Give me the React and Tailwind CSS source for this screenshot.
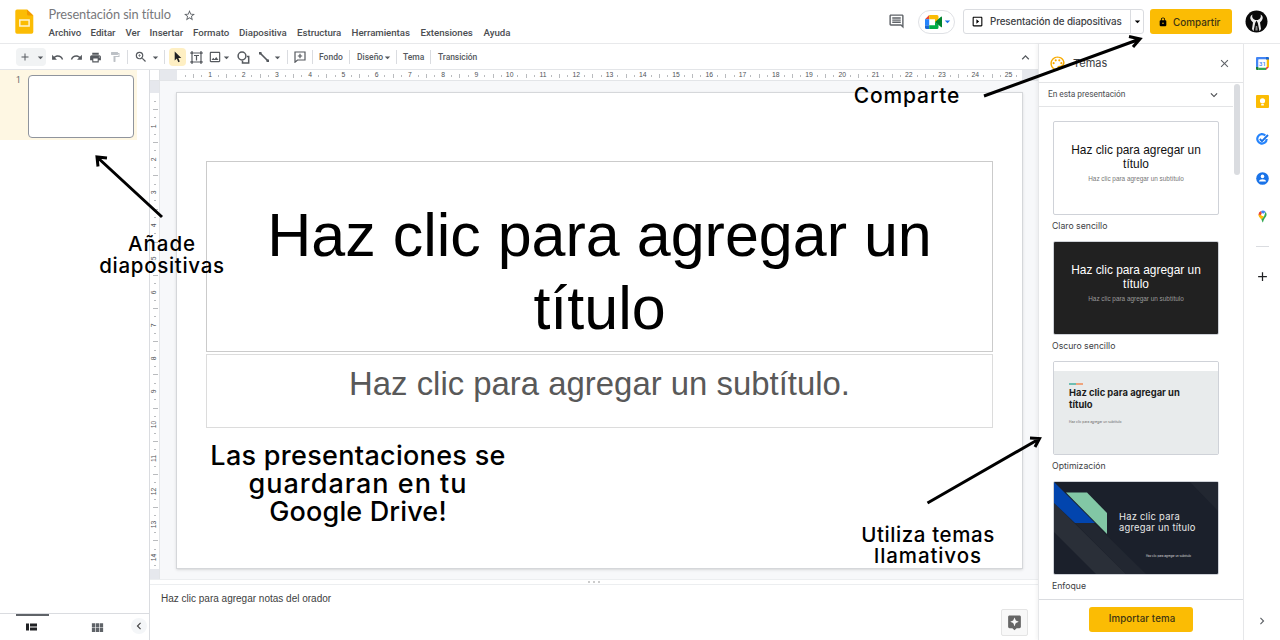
import React from 'react';
import {
  MdAdd, MdArrowDropDown, MdUndo, MdRedo, MdPrint, MdFormatPaint, MdZoomIn, MdOutlineImage,
  MdOutlineInsertComment, MdOutlineSlideshow, MdLock, MdOutlinePalette, MdClose, MdExpandMore,
  MdExpandLess, MdStarBorder, MdAssistant, MdChevronLeft, MdChevronRight, MdViewModule,
} from 'react-icons/md';

const menu = [
  ['Archivo', 'w-[42px]'], ['Editar', 'w-[35px]'], ['Ver', 'w-[24px]'], ['Insertar', 'w-[43.5px]'],
  ['Formato', 'w-[46px]'], ['Diapositiva', 'w-[58px]'], ['Estructura', 'w-[54.5px]'],
  ['Herramientas', 'w-[69px]'], ['Extensiones', 'w-[63px]'], ['Ayuda', 'w-[30px]'],
];

function Slot({ w, children }) {
  return <div className={'flex h-full shrink-0 items-center justify-center ' + w}>{children}</div>;
}

function Sep({ w }) {
  return <Slot w={w}><div className="h-[14px] w-px bg-[#dadce0]" /></Slot>;
}

function Caret({ w }) {
  return <Slot w={w}><MdArrowDropDown size={13} className="shrink-0" /></Slot>;
}

function Header() {
  return (
    <header className="flex h-[44px] shrink-0 border-b border-[#e8e9eb] bg-white">
      <svg className="ml-[15px] mt-[9px] h-[25px] w-[19px] shrink-0" viewBox="0 0 19 25">
        <path d="M2 0.5h10l6.3 6V23a1.8 1.8 0 0 1-1.8 1.8H2A1.8 1.8 0 0 1 .3 23V2.3A1.8 1.8 0 0 1 2 .5Z" fill="#fbbc04" />
        <path d="M12 .5l6.3 6H13.500a1.5 1.5 0 0 1-1.500-1.500Z" fill="#f29900" />
        <path d="M4.800 10.900h9.300v6.200H4.800Z" fill="none" stroke="#fff3cf" strokeWidth="1.500" />
      </svg>
      <div className="ml-[14.600px] flex w-[600px] flex-col">
        <div className="flex h-[26px] items-center pt-[4px]">
          <span className="w-[134px] whitespace-nowrap text-[12.800px] tracking-[-0.1px] text-[#77787b] font-['Lato',sans-serif]">Presentación sin título</span>
          <MdStarBorder size={13} className="text-[#5f6368]" />
        </div>
        <nav className="flex h-[14px] items-center text-[9.700px] font-medium tracking-[-0.05px] text-[#4b4d51] font-['Roboto',sans-serif]">
          {menu.map(([t, w]) => <span key={t} className={'whitespace-nowrap ' + w}>{t}</span>)}
        </nav>
      </div>
      <div className="ml-auto flex h-[43px] items-center pr-[12px]">
        <MdOutlineInsertComment size={17} className="mr-[13px] text-[#5f6368]" />
        <div className="mr-[8px] flex h-[24px] w-[37px] items-center rounded-full border border-[#dfe1e5] pl-[6px]">
          <svg className="shrink-0" width="18" height="14" viewBox="0 0 18 14">
            <path d="M0 4.200 4.200 0v4.200Z" fill="#ea4335" />
            <path d="M4.200 0H12q1.500 0 1.500 1.500V5L10 7.500V4.200H4.200Z" fill="#fbbc04" />
            <path d="M0 4.200h4.200v6H0Z" fill="#2684fc" />
            <path d="M0 10.200h4.200V14H1.500Q0 14 0 12.500Z" fill="#1668d6" />
            <path d="M4.200 10.200H10V7l3.500 2.500v3q0 1.500-1.500 1.500H4.200Z" fill="#00ac47" />
            <path d="M10 7 16 1.800q1-.6 1 .4v9.500q0 1-1 .4Z" fill="#00832d" />
          </svg>
          <MdArrowDropDown size={13} className="-ml-[2px] shrink-0 text-[#1a73e8]" />
        </div>
        <div className="mr-[6px] flex h-[25px] w-[181px] items-center rounded-[3px] border border-[#dadce0] text-[#3c4043]">
          <MdOutlineSlideshow size={13} className="ml-[7px] mr-[6px] shrink-0 text-black" />
          <span className="w-[140px] shrink-0 whitespace-nowrap pt-px text-[9.800px] font-medium tracking-[-0.1px] font-['Inter',sans-serif]">Presentación de diapositivas</span>
          <div className="flex h-full flex-1 items-center justify-center border-l border-[#dadce0]"><MdArrowDropDown size={13} className="shrink-0 text-black" /></div>
        </div>
        <div className="mr-[13px] flex h-[25px] w-[82px] items-center rounded-[3px] bg-[#fbbc04] pl-[8px] text-[#3d3413]">
          <MdLock size={10} className="mr-[5px] text-black" />
          <span className="pt-px text-[9.900px] font-medium font-['Inter',sans-serif]">Compartir</span>
        </div>
        <svg width="23" height="23" viewBox="0 0 23 23">
          <circle cx="11.500" cy="11.500" r="11" fill="#090909" />
          <path d="M7.500 4.500c-2.300 1.200-3 3.500-1.300 6L8 12.500 7 19l1.500 2.200L10.200 13l1.300-2.500 1.300 2.500 1.700 8.200L16 19l-1-6.500 1.800-2c1.700-2.500 1-4.800-1.300-6 1 2-.3 3.500-1 4.500l-1.700 1h-2.600L8.500 9c-.7-1-2-2.500-1-4.500Z" fill="#ececec" />
          <path d="M10.800 16h1.400l.5 4.500h-2.400Z" fill="#888" />
        </svg>
      </div>
    </header>
  );
}

function Toolbar() {
  return (
    <div className="flex h-[25px] w-[1037px] shrink-0 items-center bg-white pl-[16px] pt-px text-[#55595e] font-['Roboto',sans-serif]">
      <div className="flex h-[18px] w-[30px] shrink-0 rounded-sm bg-[#f1f3f4]">
        <Slot w="w-[18px]"><MdAdd size={12} /></Slot>
        <Caret w="w-[12px]" />
      </div>
      <Slot w="w-[22px]"><MdUndo size={13} /></Slot>
      <Slot w="w-[17px]"><MdRedo size={13} /></Slot>
      <Slot w="w-[21px]"><MdPrint size={13} /></Slot>
      <Slot w="w-[18px]"><MdFormatPaint size={12} className="text-[#bdc1c6]" /></Slot>
      <Sep w="w-[7px]" />
      <Slot w="w-[19px]"><MdZoomIn size={14} /></Slot>
      <Caret w="w-[10px]" />
      <Sep w="w-[9px]" />
      <div className="flex h-[18px] w-[17px] shrink-0 items-center justify-center rounded-sm bg-[#feefc3]">
        <svg width="8" height="12" viewBox="0 0 8 12"><path d="M.7.500v9l2.100-2 1.500 3.700 1.500-.6L4.300 7h3Z" fill="#202124" /></svg>
      </div>
      <Slot w="w-[21px]">
        <svg width="13" height="13" viewBox="0 0 13 13" fill="none" stroke="currentColor">
          <path d="M2 2h9v9H2ZM4 4.500h5M6.500 4.500v5" strokeWidth="1.200" />
          <path d="M0 2h3M2 0v3M10 2h3M11 0v3M0 11h3M2 10v3M10 11h3M11 10v3" strokeWidth="1.200" />
        </svg>
      </Slot>
      <Slot w="w-[15px]"><MdOutlineImage size={14} /></Slot>
      <Caret w="w-[8px]" />
      <Slot w="w-[26px]">
        <svg width="13" height="13" viewBox="0 0 13 13" fill="none" stroke="currentColor" strokeWidth="1.500">
          <circle cx="5" cy="5" r="3.900" /><path d="M10 5.500h1.700V12H5.500v-2.200" />
        </svg>
      </Slot>
      <Slot w="w-[15px]">
        <svg width="10" height="10" viewBox="0 0 10 10"><path d="M1 1 9 9" stroke="currentColor" strokeWidth="1.700" /><path d="M0 0h2.500v2.500H0ZM7.500 7.500H10V10H7.500Z" fill="currentColor" /></svg>
      </Slot>
      <Caret w="w-[13px]" />
      <Sep w="w-[6px]" />
      <Slot w="w-[19px]">
        <svg width="12" height="12" viewBox="0 0 12 12" fill="none" stroke="currentColor" strokeWidth="1.200"><path d="M1 1h10v8H3.500L1 11.200ZM6 2.800v4.400M3.800 5h4.400" /></svg>
      </Slot>
      <Sep w="w-[6px]" />
      <span className="ml-[4px] w-[27px] text-[8.500px] font-medium">Fondo</span>
      <Sep w="w-[7px]" />
      <span className="ml-[4px] w-[26px] text-[8.500px] font-medium">Diseño</span>
      <Caret w="w-[8px]" />
      <Sep w="w-[10px]" />
      <span className="ml-[2px] w-[24px] text-[8.500px] font-medium">Tema</span>
      <Sep w="w-[7px]" />
      <span className="ml-[4px] text-[8.500px] font-medium tracking-[-0.05px]">Transición</span>
      <MdExpandLess size={15} className="ml-auto mr-[4px]" />
    </div>
  );
}

function HRuler() {
  return (
    <div className="flex h-[11px] border-b border-[#e3e5e8] bg-white">
      <div className="w-[10px] shrink-0 border-r border-[#dfe1e4]" />
      <div className="w-[17px] shrink-0 bg-[#e6e8ed]" />
      <div className="flex w-[845px] shrink-0 overflow-hidden pl-[4.160px] pt-px">
        {Array.from({ length: 26 }, (_, i) => (
          <div key={i} className="flex w-[33.280px] shrink-0 items-center">
            <div className="flex w-1/4 justify-center"><i className="h-[2px] w-px bg-[#b9bbbe]" /></div>
            <div className="flex w-1/4 justify-center"><i className="h-[4px] w-px bg-[#b9bbbe]" /></div>
            <div className="flex w-1/4 justify-center"><i className="h-[2px] w-px bg-[#b9bbbe]" /></div>
            <div className="flex w-1/4 justify-center text-[6.800px] leading-none text-[#505358] font-['Liberation_Sans',sans-serif]">{i < 25 ? i + 1 : ''}</div>
          </div>
        ))}
      </div>
      <div className="flex-1 bg-[#e6e8ed]" />
    </div>
  );
}

function VRuler() {
  return (
    <div className="flex w-[10px] shrink-0 flex-col border-r border-[#e3e5e8] bg-white">
      <div className="h-[12px] shrink-0 bg-[#e6e8ed]" />
      <div className="h-[476px] shrink-0 overflow-hidden pl-px pt-[4px]">
        {Array.from({ length: 15 }, (_, i) => (
          <div key={i} className="flex h-[33.200px] flex-col items-center">
            <div className="flex h-1/4 items-center"><i className="h-px w-[2px] bg-[#b9bbbe]" /></div>
            <div className="flex h-1/4 items-center"><i className="h-px w-[5px] bg-[#b9bbbe]" /></div>
            <div className="flex h-1/4 items-center"><i className="h-px w-[2px] bg-[#b9bbbe]" /></div>
            <div className="flex h-1/4 items-center justify-center"><span className="-rotate-90 text-[6.800px] leading-none text-[#505358] font-['Liberation_Sans',sans-serif]">{i < 14 ? i + 1 : ''}</span></div>
          </div>
        ))}
      </div>
      <div className="flex-1 bg-[#e6e8ed]" />
    </div>
  );
}

function Filmstrip() {
  return (
    <aside className="flex w-[150px] shrink-0 flex-col border-r border-[#dadce0] bg-white">
      <div className="flex h-[70px] w-[137px] bg-[#fef7e3] pt-[5px]">
        <span className="w-[28px] pl-[16px] pt-px text-[8.500px] leading-[9px] text-[#5f6368] font-['Roboto',sans-serif]">1</span>
        <div className="h-[63px] w-[106px] rounded-[4px] border-[1.500px] border-[#8f949d] bg-white" />
      </div>
      <div className="mt-auto flex h-[27px] border-t border-[#dadce0]">
        <div className="ml-[16px] flex w-[33px] flex-col items-center border-t-2 border-[#5f6368] pr-[3px] pt-[7px]">
          <svg width="11" height="8" viewBox="0 0 11 8"><path d="M0 .500h3v7H0ZM4 .500h7v3H4ZM4 4.500h7v3H4Z" fill="#202124" /></svg>
        </div>
        <div className="ml-[40px] flex w-[16px] items-center justify-center"><MdViewModule size={15} className="text-[#5f6368]" /></div>
        <div className="ml-[26px] mt-[4px] flex h-[16px] w-[16px] items-center justify-center rounded-full bg-[#f4f6f8]"><MdChevronLeft size={14} className="text-[#444]" /></div>
      </div>
    </aside>
  );
}

function Editor() {
  return (
    <section className="flex min-w-0 flex-1 flex-col">
      <HRuler />
      <div className="flex h-[498px] shrink-0 bg-[#f7f8fa]">
        <VRuler />
        <div className="ml-[16px] mt-[11px] flex h-[477px] w-[847px] flex-col border border-[#d5d7da] bg-white px-[29px] pt-[68px] text-center shadow-sm font-['Liberation_Sans',Arial,sans-serif]">
          <div className="h-[191px] shrink-0 border border-[#cbcbcb] pt-[37px] text-[61px] leading-[73px] text-black">
            Haz clic para agregar un<br />título
          </div>
          <div className="mt-[2px] h-[74px] shrink-0 border border-[#dcdcdc] pt-[10px] text-[32.900px] leading-[38px] text-[#595959]">
            Haz clic para agregar un subtítulo.
          </div>
        </div>
      </div>
      <div className="flex h-[6px] shrink-0 items-center justify-center gap-[3px] border-y border-[#eceef0] bg-white">
        <i className="size-[2px] rounded-full bg-[#bbb]" /><i className="size-[2px] rounded-full bg-[#bbb]" /><i className="size-[2px] rounded-full bg-[#bbb]" />
      </div>
      <div className="flex flex-1 justify-between bg-white pl-[11px] pr-[10px]">
        <p className="pt-[7px] text-[10px] leading-[14px] text-[#404040] font-['Liberation_Sans',Arial,sans-serif]">Haz clic para agregar notas del orador</p>
        <div className="mt-[24px] flex size-[27px] items-center justify-center rounded-[2px] border border-[#e4e4e4] bg-[#f8f8f8]"><MdAssistant size={17} className="text-[#666]" /></div>
      </div>
    </section>
  );
}

function Theme({ label, children }) {
  return (
    <div className="flex h-[120px] shrink-0 flex-col">
      <div className="h-[94px] w-[166px] overflow-hidden rounded-[2px] border border-[#cfd2d8]">{children}</div>
      <span className="-ml-px pt-[5px] text-[8.700px] leading-[13px] text-[#3c4043] font-['Inter',sans-serif]">{label}</span>
    </div>
  );
}

function Themes() {
  return (
    <aside className="flex w-[206px] shrink-0 flex-col border-x border-[#e6e7e9] bg-white shadow-[-2px_0_3px_rgba(0,0,0,0.04)]">
      <div className="flex h-[39px] shrink-0 items-center border-b border-[#e3e4e6] pl-[10px] pr-[12px]">
        <MdOutlinePalette size={17} className="text-[#f9ab00]" />
        <span className="ml-[7px] text-[11px] text-[#3c4043] font-['Inter',sans-serif]">Temas</span>
        <MdClose size={13} className="ml-auto text-[#5f6368]" />
      </div>
      <div className="flex h-[516px] shrink-0">
        <div className="flex w-[194px] flex-col">
          <div className="flex h-[24px] shrink-0 items-center justify-between border-b border-[#e3e4e6] pl-[9px] pr-[12px] text-[#4b4d51]">
            <span className="text-[8.400px] tracking-[-0.03px] font-['Roboto',sans-serif]">En esta presentación</span>
            <MdExpandMore size={14} />
          </div>
          <div className="flex flex-col pl-[14px] pt-[14px]">
            <Theme label="Claro sencillo">
              <div className="h-full pt-[21px] text-center text-[11.900px] leading-[14px] text-[#111] font-['Liberation_Sans',sans-serif]">
                Haz clic para agregar un<br />título
                <p className="pt-[3px] text-[6.400px] leading-[9px] text-[#777]">Haz clic para agregar un subtítulo</p>
              </div>
            </Theme>
            <Theme label="Oscuro sencillo">
              <div className="h-full bg-[#212121] pt-[21px] text-center text-[11.900px] leading-[14px] text-white font-['Liberation_Sans',sans-serif]">
                Haz clic para agregar un<br />título
                <p className="pt-[3px] text-[6.400px] leading-[9px] text-[#9a9a9a]">Haz clic para agregar un subtítulo</p>
              </div>
            </Theme>
            <Theme label="Optimización">
              <div className="h-full border-t-[9px] border-white bg-[#e8ebec] pl-[15px] pt-[12px] text-[9.400px] font-bold leading-[11.500px] text-[#1b1b1b] font-['Inter',sans-serif]">
                <div className="mb-[2px] flex h-[2px] w-[14px]"><div className="h-[2px] w-[7px] bg-[#6dbdb2]" /><div className="h-[2px] w-[7px] bg-[#efa47d]" /></div>
                Haz clic para agregar un<br />título
                <p className="pt-[8px] text-[3.300px] font-normal leading-[9px] text-[#666]">Haz clic para agregar un subtítulo</p>
              </div>
            </Theme>
            <Theme label="Enfoque">
              <div className="relative h-full bg-[#1b202b]">
                <svg className="absolute inset-0" width="164" height="92" viewBox="0 0 164 92">
                  <path d="M0 21 72 92H42L0 50Z" fill="#2a2f38" /><path d="M21 41h19l52 51H72Z" fill="#222731" />
                  <path d="M136 0h28v29Z" fill="#222731" />
                  <path d="M0 0 41 41H21L0 21Z" fill="#0245ae" /><path d="M12 10.500h21L53 31v21Z" fill="#82c7a5" />
                </svg>
                <div className="relative pl-[65px] pt-[30px] text-[9.400px] leading-[10.800px] tracking-[0.24px] text-[#e8e8e8] font-['Inter',sans-serif]">
                  Haz clic para<br />agregar un título
                  <p className="pl-[27px] pt-[18px] text-[2.900px] leading-[9px] tracking-[-0.03px] text-[#ddd]">Haz clic para agregar un subtítulo</p>
                </div>
              </div>
            </Theme>
          </div>
        </div>
        <div className="ml-[1px] mt-[1px] h-[91px] w-[6px] rounded-full bg-[#dadce0]" />
      </div>
      <div className="flex flex-1 items-center justify-center border-t border-[#dadce0] bg-white pb-[2px]">
        <div className="flex h-[25px] w-[104px] items-center justify-center rounded-[3px] bg-[#fbbc04] pl-[2px] text-[9.700px] font-medium tracking-[0.1px] text-[#3d3413] font-['Inter',sans-serif]">Importar tema</div>
      </div>
    </aside>
  );
}

function Rail() {
  return (
    <aside className="flex flex-1 flex-col items-center bg-white pt-[13px]">
      <div className="flex flex-col items-center gap-[25.200px]">
        <svg width="13" height="13" viewBox="0 0 13 13">
          <path d="M1 0h9v2.500H2.500V10H0V1a1 1 0 0 1 1-1Z" fill="#4285f4" /><path d="M10 0h2a1 1 0 0 1 1 1v2h-3Z" fill="#1967d2" />
          <path d="M10.500 2.500H13V10h-2.500Z" fill="#fbbc04" /><path d="M2.500 10.500H10V13H2.500Z" fill="#34a853" /><path d="M0 10h2.500v3H1a1 1 0 0 1-1-1Z" fill="#188038" /><path d="M10 10h3l-3 3Z" fill="#ea4335" />
          <path d="M2.500 2.500h8v8h-8Z" fill="#fff" />
          <text x="6.500" y="8.700" textAnchor="middle" fontSize="6" fontFamily="Roboto, sans-serif" fontWeight="500" fill="#4285f4">31</text>
        </svg>
        <svg width="13" height="13" viewBox="0 0 13 13"><rect width="13" height="13" rx="1" fill="#fbbc04" /><circle cx="6.500" cy="5.800" r="2.600" fill="#fff" /><path d="M5.200 9h2.600v1.500H5.200Z" fill="#fff" /></svg>
        <svg width="13" height="13" viewBox="0 0 13 13" fill="none"><path d="M9.300 2.500A4.700 4.700 0 1 0 10.700 6" stroke="#2684fc" strokeWidth="2.200" /><path d="M3.800 6 6 8.200 12 2" stroke="#1a73e8" strokeWidth="1.900" /></svg>
        <svg width="13" height="13" viewBox="0 0 13 13"><circle cx="6.500" cy="6.500" r="6.300" fill="#1a73e8" /><circle cx="6.500" cy="4.400" r="1.800" fill="#fff" /><path d="M3 9.600c0-3.200 7-3.200 7 0Z" fill="#fff" /></svg>
        <svg width="13" height="13" viewBox="0 0 13 13">
          <path d="M2.500 4.500A4 4 0 0 1 5 1l1.500 3.500L3.300 7Z" fill="#ea4335" /><path d="M5 1a4 4 0 0 1 4.500.7L6.500 5Z" fill="#4285f4" />
          <path d="M9.500 1.700c2.500 3.300 0 5.300-1.200 7.300-.8 1.300-1 2.500-1.400 3.500-.8-.5-.8-2-1.600-3L8 6.500Z" fill="#34a853" /><path d="M2.500 4.500c0 2 1.500 3.500 2.800 5L8 6.500 5 5Z" fill="#fbbc04" />
          <circle cx="6.500" cy="4.600" r="1.400" fill="#fff" />
        </svg>
      </div>
      <div className="mt-[23px] h-px w-[13px] bg-[#dadce0]" />
      <MdAdd size={15} className="mt-[22px] text-[#202124]" />
      <MdChevronRight size={14} className="mb-[12px] mt-auto text-[#5f6368]" />
    </aside>
  );
}

function Notes() {
  return (
    <div className="pointer-events-none absolute inset-0 text-center font-medium text-black font-['Inter',sans-serif]">
      <svg className="absolute inset-0" width="1280" height="640" viewBox="0 0 1280 640" fill="none" stroke="#000" strokeWidth="3">
        <path d="M984 96 1140 39M1129 36.500 1140 39 1133 47" />
        <path d="M162 217 97 157M98 166.500 97 157 107 158" />
        <path d="M927.500 503 1039 439M1030 438 1039.500 438.500 1035 447" />
      </svg>
      <p className="absolute left-[807px] top-[84px] w-[200px] text-[21px] leading-[24px] tracking-[0.850px]">Comparte</p>
      <p className="absolute left-[62px] top-[233px] w-[200px] text-[20.500px] leading-[22px] tracking-[0.700px]"><span className="tracking-[1px]">Añade</span><br />diapositivas</p>
      <p className="absolute left-[208px] top-[442px] w-[300px] text-[27px] leading-[28px] tracking-[0.300px]">Las presentaciones se<br /><span className="tracking-[1px]">guardaran en tu</span><br /><span className="tracking-[0.150px]">Google Drive!</span></p>
      <p className="absolute left-[828px] top-[524px] w-[200px] text-[20.500px] leading-[21px] tracking-[0.600px]">Utiliza temas<br /><span className="tracking-[0.900px]">llamativos</span></p>
    </div>
  );
}

export default function App() {
  return (
    <div className="relative flex h-[640px] w-[1280px] flex-col overflow-hidden bg-white">
      <Header />
      <div className="flex min-h-0 flex-1">
        <main className="flex w-[1038px] shrink-0 flex-col">
          <Toolbar />
          <div className="flex min-h-0 flex-1 border-t border-[#e3e5e8]">
            <Filmstrip />
            <Editor />
          </div>
        </main>
        <Themes />
        <Rail />
      </div>
      <Notes />
    </div>
  );
}
